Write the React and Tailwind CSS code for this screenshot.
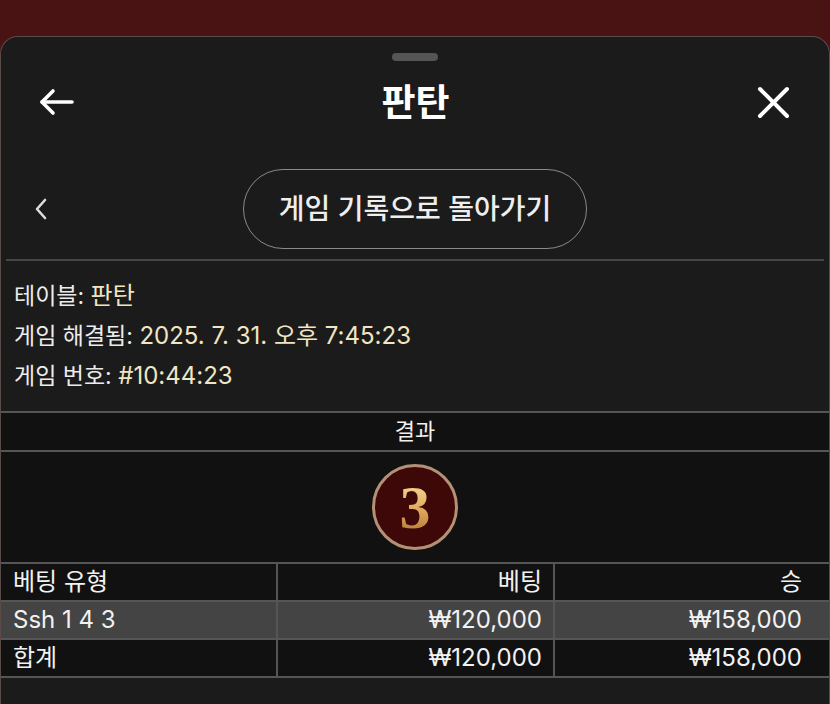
import React from 'react';

const sans = { fontFamily: "Inter, 'Noto Sans CJK KR', sans-serif" };

function InfoLine({ label, value }) {
  return (
    <div className="leading-[40px]">
      <span className="text-[#ececec]">{label}: </span>
      <span className="text-[#f2e6c2] text-[24px]">{value}</span>
    </div>
  );
}

export default function App() {
  const rows = [
    { type: '베팅 유형', bet: '베팅', win: '승', bg: 'bg-[#111111]' },
    { type: 'Ssh 1 4 3', bet: '₩120,000', win: '₩158,000', bg: 'bg-[#444444]' },
    { type: '합계', bet: '₩120,000', win: '₩158,000', bg: 'bg-[#111111]' },
  ];

  return (
    <div className="w-[830px] h-[704px] overflow-hidden bg-[#4a1313] pt-[36px]" style={sans}>
      <div className="h-full bg-[#1b1b1b] rounded-t-[18px] border-t border-x border-[#5b4b48] text-white">
        <div className="pt-[16px] flex justify-center">
          <div className="w-[46px] h-[8px] rounded-full bg-[#555555]" />
        </div>

        {/* header */}
        <div className="h-[82px] flex items-center justify-between pl-[38px] pr-[39px]">
          <svg width="35" height="28" viewBox="0 0 35 28" fill="none" stroke="white" strokeWidth="3.6" strokeLinecap="round" strokeLinejoin="round">
            <path d="M33 14H3" />
            <path d="M14 3L3 14l11 11" />
          </svg>
          <h1 className="text-[37px] font-bold leading-none">판탄</h1>
          <svg width="33" height="33" viewBox="0 0 33 33" fill="none" stroke="white" strokeWidth="4" strokeLinecap="round">
            <path d="M3 3l27 27" />
            <path d="M30 3L3 30" />
          </svg>
        </div>

        {/* back to history */}
        <div className="mt-[26px] grid grid-cols-[1fr_auto_1fr] items-center">
          <div className="pl-[33px]">
            <svg width="14" height="22" viewBox="0 0 14 22" fill="none" stroke="#dddddd" strokeWidth="2.6" strokeLinecap="round" strokeLinejoin="round">
              <path d="M11 2L3 11l8 9" />
            </svg>
          </div>
          <button className="h-[80px] px-[35px] rounded-full border-[1.5px] border-[#8a8a8a] text-[28px] font-medium text-[#eeeeee]">
            게임 기록으로 돌아가기
          </button>
          <div />
        </div>

        <div className="mt-[10px] mx-[5px] h-[2px] bg-[#454545]" />

        {/* info */}
        <div className="pt-[15px] pb-[15px] pl-[13px] text-[23px]">
          <InfoLine label="테이블" value="판탄" />
          <InfoLine label="게임 해결됨" value="2025. 7. 31. 오후 7:45:23" />
          <InfoLine label="게임 번호" value="#10:44:23" />
        </div>

        {/* result */}
        <div className="border-t-2 border-[#555555] bg-[#111111]">
          <div className="h-[39px] border-b-2 border-[#555555] flex items-center justify-center text-[22px] text-[#f0f0f0]">
            결과
          </div>
          <div className="h-[110px] flex items-center justify-center">
            <div className="w-[86px] h-[86px] rounded-full border-[3px] border-[#b39176] bg-[#3e0808] flex items-center justify-center">
              <span
                className="text-[62px] font-bold leading-none bg-gradient-to-b from-[#fbe3a0] via-[#e2ae62] to-[#b0722e] bg-clip-text text-transparent"
                style={{ fontFamily: "'Liberation Serif', serif" }}
              >
                3
              </span>
            </div>
          </div>
        </div>

        {/* table */}
        <div className="border-t-2 border-[#555555] text-[24px] text-[#f2f2f2]">
          {rows.map((r, i) => (
            <div key={i} className={`grid grid-cols-[277px_277px_1fr] h-[38px] border-b-2 border-[#555555] ${r.bg}`}>
              <div className="border-r-2 border-[#555555] pl-[12px] flex items-center">{r.type}</div>
              <div className="border-r-2 border-[#555555] pr-[11px] flex items-center justify-end">{r.bet}</div>
              <div className="pr-[27px] flex items-center justify-end">{r.win}</div>
            </div>
          ))}
        </div>
      </div>
    </div>
  );
}
